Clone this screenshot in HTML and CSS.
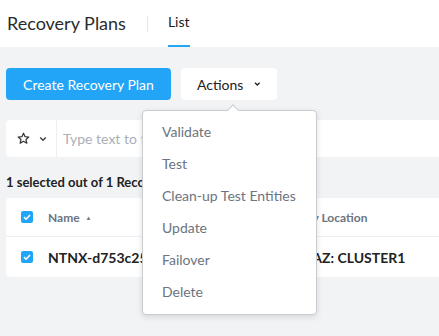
FILE: index.html
```html
<!DOCTYPE html>
<html>
<head>
<meta charset="utf-8">
<link rel="stylesheet" href="styles.css">
</head>
<body>
<header class="topbar">
  <h1 class="title">Recovery Plans</h1>
  <span class="sep"></span>
  <nav class="tabs"><a class="tab active">List</a></nav>
</header>
<main class="content">
  <div class="toolbar">
    <button class="btn primary">Create Recovery Plan</button>
    <div class="actions-wrap">
      <button class="btn plain">Actions
        <svg class="chev" width="8" height="6" viewBox="0 0 8 6"><path d="M1.2 1.5 L4 4.3 L6.8 1.5" fill="none" stroke="#222" stroke-width="1.6"/></svg>
      </button>
      <div class="menu">
        <span class="caret"></span>
        <div class="item">Validate</div>
        <div class="item">Test</div>
        <div class="item">Clean-up Test Entities</div>
        <div class="item">Update</div>
        <div class="item">Failover</div>
        <div class="item">Delete</div>
      </div>
    </div>
  </div>
  <div class="filter">
    <div class="fav">
      <svg width="13" height="13" viewBox="0 0 14 14"><path d="M7 1.3 L8.7 5 L12.7 5.4 L9.7 8.1 L10.6 12.1 L7 10 L3.4 12.1 L4.3 8.1 L1.3 5.4 L5.3 5 Z" fill="none" stroke="#333" stroke-width="1.3" stroke-linejoin="round"/></svg>
      <svg width="8" height="6" viewBox="0 0 8 6"><path d="M1.2 1.5 L4 4.3 L6.8 1.5" fill="none" stroke="#444" stroke-width="1.5"/></svg>
    </div>
    <div class="search">Type text to filter by</div>
  </div>
  <div class="count">1 selected out of 1 Recovery Plans</div>
  <div class="table">
    <div class="row head">
      <span class="cb"><svg width="12" height="12" viewBox="0 0 12 12"><rect width="12" height="12" rx="2" fill="#22a5f7"/><path d="M3 6.2 L5.1 8.2 L9 4" fill="none" stroke="#fff" stroke-width="1.6"/></svg></span>
      <span class="c-name">Name <span class="sort">▲</span></span>
      <span class="c-loc">Primary Location</span>
    </div>
    <div class="row body">
      <span class="cb"><svg width="12" height="12" viewBox="0 0 12 12"><rect width="12" height="12" rx="2" fill="#22a5f7"/><path d="M3 6.2 L5.1 8.2 L9 4" fill="none" stroke="#fff" stroke-width="1.6"/></svg></span>
      <span class="c-name">NTNX-d753c25e-rp</span>
      <span class="c-loc">Local AZ: CLUSTER1</span>
    </div>
  </div>
</main>
</body>
</html>
```
FILE: styles.css
```css
* { box-sizing: border-box; }
html, body { margin: 0; padding: 0; }
body {
  font-family: "Lato", "Open Sans", sans-serif;
  background: #f2f3f5;
  width: 439px;
  height: 336px;
  overflow: hidden;
  color: #222;
}
.topbar {
  background: #fff;
  height: 47px;
  display: flex;
  align-items: center;
  padding-left: 7px;
}
.title {
  margin: 0;
  font-weight: 400;
  font-size: 18px;
  color: #2b2b2b;
  padding-bottom: 2px;
}
.sep {
  width: 1px;
  height: 16px;
  background: #e4e6ea;
  margin: 0 20px 0 21px;
}
.tabs { display: flex; height: 100%; }
.tab {
  display: flex;
  align-items: center;
  font-size: 14px;
  color: #222;
  height: 100%;
  padding-bottom: 2px;
  border-bottom: 2px solid transparent;
}
.tab.active { border-bottom-color: #22a5f7; }
.content { padding: 21px 0 0 6px; }
.toolbar { display: flex; gap: 10px; height: 32px; }
.btn {
  font-family: inherit;
  font-size: 14px;
  border: 0;
  border-radius: 4px;
  height: 32px;
  padding: 0 16px;
  display: flex;
  align-items: center;
}
.btn.primary { background: #22a5f7; color: #fff; width: 165px; justify-content: center; }
.btn.plain { background: #fff; color: #222; width: 96px; gap: 11px; padding-left: 16px; }
.actions-wrap { position: relative; }
.menu {
  position: absolute;
  left: -39px;
  top: 42px;
  width: 175px;
  background: #fff;
  border: 1px solid #c9ccd1;
  border-radius: 4px;
  box-shadow: 0 2px 6px rgba(0,0,0,0.12);
  padding: 5px 0 6px;
  z-index: 10;
}
.caret {
  position: absolute;
  top: -5px;
  left: 86px;
  width: 8px;
  height: 8px;
  background: #fff;
  border-left: 1px solid #c9ccd1;
  border-top: 1px solid #c9ccd1;
  transform: rotate(45deg);
}
.item {
  height: 32px;
  line-height: 32px;
  padding-left: 19px;
  font-size: 14px;
  color: #6b7480;
}
.filter {
  margin-top: 20px;
  height: 37px;
  background: #fff;
  border-radius: 4px 0 0 4px;
  display: flex;
  align-items: center;
}
.fav {
  width: 51px;
  height: 100%;
  display: flex;
  align-items: center;
  gap: 9px;
  padding-left: 11px;
  border-right: 1px solid #eceef1;
}
.search { padding-left: 6px; font-size: 14px; color: #a9afb8; }
.count {
  font-size: 13px;
  font-weight: 700;
  color: #222;
  margin-top: 17px;
  height: 24px;
}
.table {
  background: #fff;
  border-radius: 4px 0 0 4px;
}
.row { display: flex; align-items: center; }
.row.head { height: 39px; border-bottom: 1px solid #eceef1; font-size: 12px; font-weight: 700; color: #6b7480; }
.row.body { height: 40px; font-size: 14px; font-weight: 700; color: #222; }
.cb { width: 42px; padding-left: 15px; display: flex; }
.c-name { width: 229px; white-space: nowrap; overflow: hidden; }
.sort { font-size: 6px; vertical-align: 2px; margin-left: 3px; }
.c-loc { white-space: nowrap; }
```
